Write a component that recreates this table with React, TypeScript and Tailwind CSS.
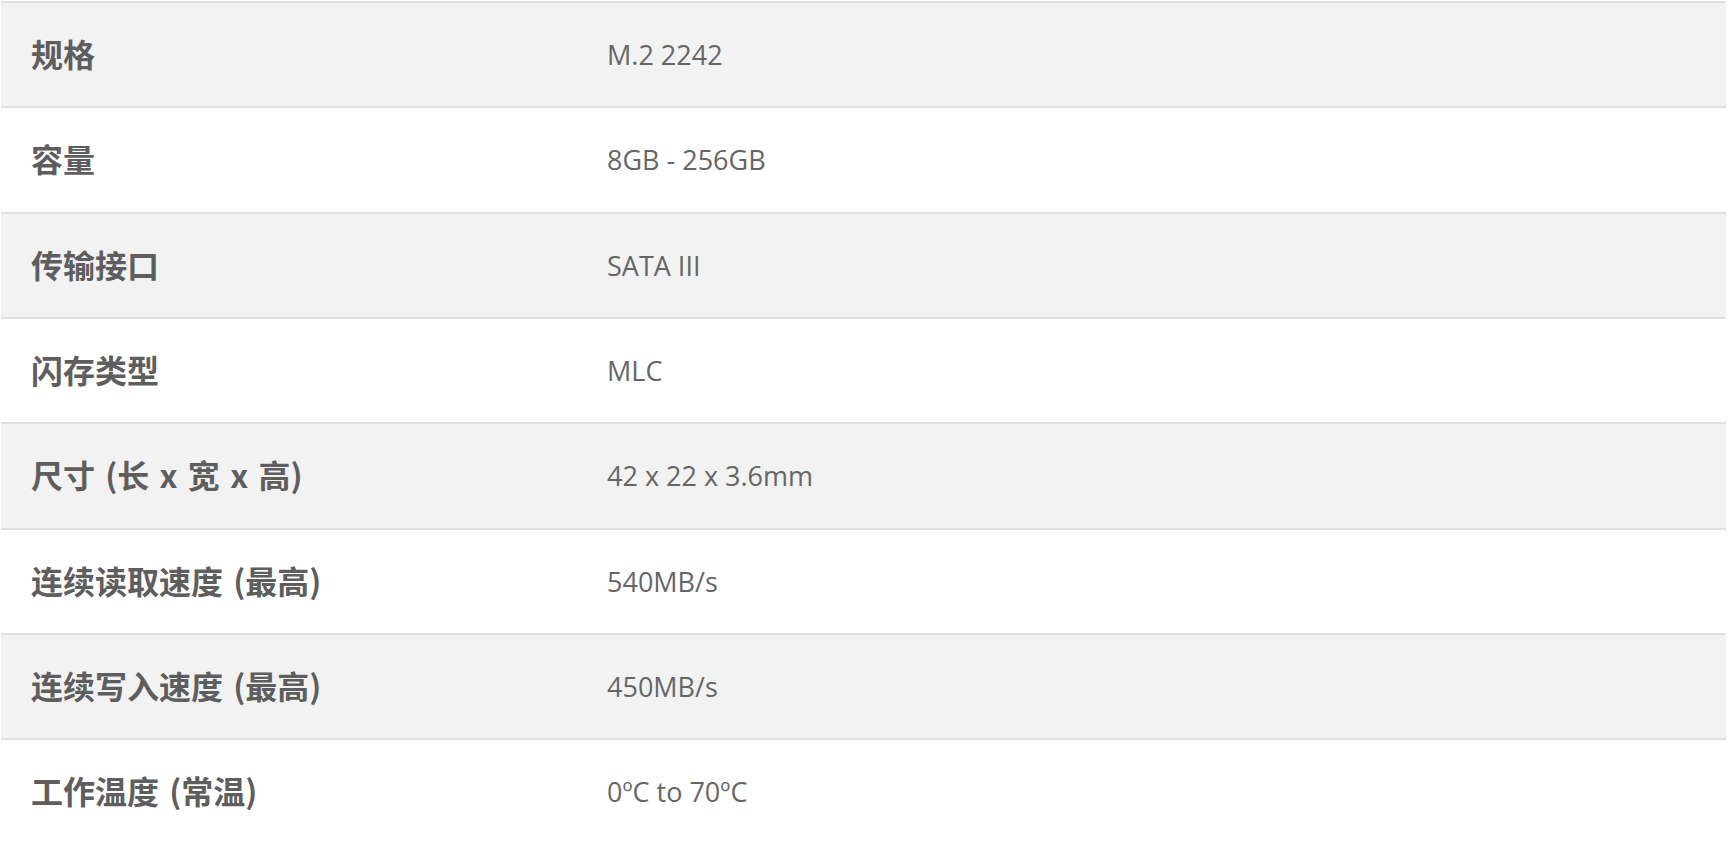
const SPECS: [string, string][] = [
  ['规格', 'M.2 2242'],
  ['容量', '8GB - 256GB'],
  ['传输接口', 'SATA III'],
  ['闪存类型', 'MLC'],
  ['尺寸 (长 x 宽 x 高)', '42 x 22 x 3.6mm'],
  ['连续读取速度 (最高)', '540MB/s'],
  ['连续写入速度 (最高)', '450MB/s'],
  ['工作温度 (常温)', '0ºC to 70ºC'],
];

export default function App() {
  return (
    <div className="w-full min-h-screen bg-white pt-px pl-px pr-[2px]">
      <div className="flex flex-col">
        {SPECS.map(([label, value], i) => (
          <div
            key={label}
            className={[
              'flex items-center h-[105.33px] shrink-0 border-t-2 border-[#e0e0e3]',
              i % 2 === 0 ? 'bg-[#f2f2f2]' : 'bg-white',
            ].join(' ')}>
            <div className="w-[606px] shrink-0 pl-[30px] pb-[3px] text-[32px] font-bold text-[#5e5e5e] font-['Noto_Sans_CJK_SC','Noto_Sans',sans-serif] leading-none [word-spacing:3px]">
              {label}
            </div>
            <div className="text-[27px] text-[#666666] font-['Open_Sans','Noto_Sans_CJK_SC',sans-serif] leading-none">
              {value}
            </div>
          </div>
        ))}
      </div>
    </div>
  );
}
